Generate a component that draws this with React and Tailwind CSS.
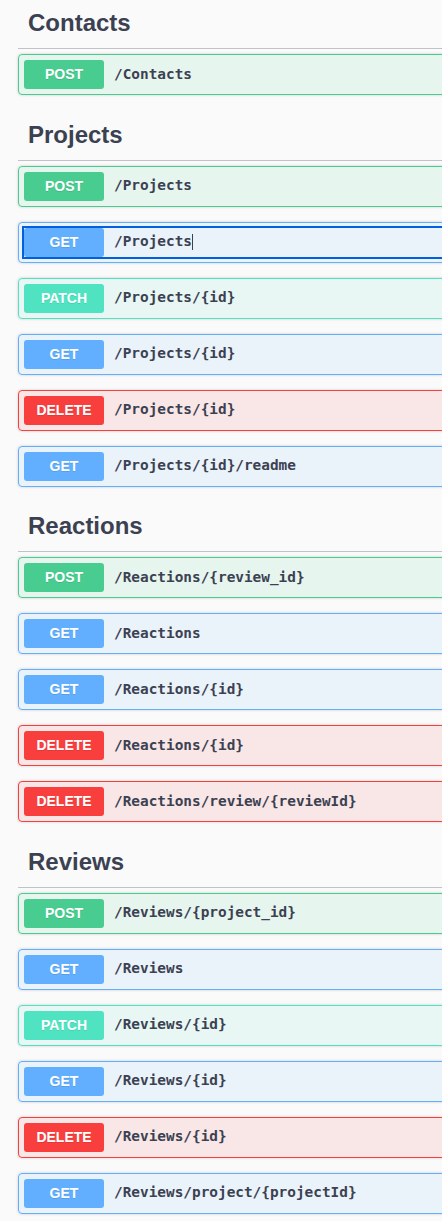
import React from "react";

const METHODS = {
  POST: {
    card: "bg-[rgba(73,204,144,0.1)] border-[#49cc90]",
    badge: "bg-[#49cc90]",
  },
  GET: {
    card: "bg-[rgba(97,175,254,0.1)] border-[#61affe]",
    badge: "bg-[#61affe]",
  },
  PATCH: {
    card: "bg-[rgba(80,227,194,0.1)] border-[#50e3c2]",
    badge: "bg-[#50e3c2]",
  },
  DELETE: {
    card: "bg-[rgba(249,62,62,0.1)] border-[#f93e3e]",
    badge: "bg-[#f93e3e]",
  },
};

const SECTIONS = [
  { tag: "Contacts", ops: [["POST", "/Contacts"]] },
  {
    tag: "Projects",
    ops: [
      ["POST", "/Projects"],
      ["GET", "/Projects", true],
      ["PATCH", "/Projects/{id}"],
      ["GET", "/Projects/{id}"],
      ["DELETE", "/Projects/{id}"],
      ["GET", "/Projects/{id}/readme"],
    ],
  },
  {
    tag: "Reactions",
    ops: [
      ["POST", "/Reactions/{review_id}"],
      ["GET", "/Reactions"],
      ["GET", "/Reactions/{id}"],
      ["DELETE", "/Reactions/{id}"],
      ["DELETE", "/Reactions/review/{reviewId}"],
    ],
  },
  {
    tag: "Reviews",
    ops: [
      ["POST", "/Reviews/{project_id}"],
      ["GET", "/Reviews"],
      ["PATCH", "/Reviews/{id}"],
      ["GET", "/Reviews/{id}"],
      ["DELETE", "/Reviews/{id}"],
      ["GET", "/Reviews/project/{projectId}"],
    ],
  },
];

function Operation({ method, path, focused }) {
  const m = METHODS[method];
  return (
    <div
      className={`mb-[15px] rounded-[4px] border shadow-[0_0_3px_rgba(0,0,0,0.19)] ${m.card}`}
    >
      <div className="p-[5px]">
        <div
          className={`flex items-center ${
            focused ? "outline-2 outline-solid outline-[#0060df]" : ""
          }`}
        >
          <span
            className={`w-[80px] h-[29px] shrink-0 flex items-center justify-center rounded-[3px] text-white text-[14px] font-bold [text-shadow:0_1px_0_rgba(0,0,0,0.1)] ${m.badge}`}
            style={{ fontFamily: '"Liberation Sans", Arial, sans-serif' }}
          >
            {method}
          </span>
          <span
            className="pl-[10px] text-[14.4px] font-bold text-[#3b4151] flex items-center"
            style={{ fontFamily: '"DejaVu Sans Mono", "Liberation Mono", monospace' }}
          >
            {path}
            {focused && <span className="inline-block w-px h-[16px] bg-[#3b4151]" />}
          </span>
        </div>
      </div>
    </div>
  );
}

export default function App() {
  return (
    <div className="w-full min-h-[1221px] overflow-hidden bg-[#fafafa] text-[#3b4151]">
      <div className="w-[720px] pl-[18px] -mt-[1.6px]">
        {SECTIONS.map((s) => (
          <section key={s.tag}>
            <h3
              className="h-[50.6px] mb-[5px] pl-[10px] flex items-center border-b border-[rgba(59,65,81,0.3)] text-[24px] font-bold text-[#3b4151]"
              style={{ fontFamily: '"Liberation Sans", Arial, sans-serif' }}
            >
              {s.tag}
            </h3>
            {s.ops.map(([method, path, focused], i) => (
              <Operation key={i} method={method} path={path} focused={focused} />
            ))}
          </section>
        ))}
      </div>
    </div>
  );
}
